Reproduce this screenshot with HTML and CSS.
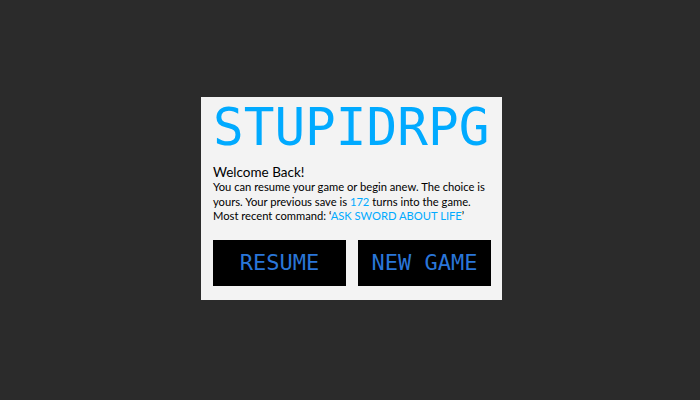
FILE: index.html
```html
<!DOCTYPE html>
<html>
<head>
<meta charset="utf-8">
<link rel="stylesheet" href="styles.css">
</head>
<body>
<div class="dialog">
  <h1 class="title">STUPIDRPG</h1>
  <div class="message">
    <p class="welcome">Welcome Back!</p>
    <p class="body">You can resume your game or begin anew. The choice is yours. Your previous save is <span class="hl">172</span> turns into the game.<br>Most recent command: ‘<span class="hl">ASK SWORD ABOUT LIFE</span>’</p>
  </div>
  <div class="actions">
    <button class="btn">RESUME</button>
    <button class="btn">NEW GAME</button>
  </div>
</div>
</body>
</html>
```

FILE: styles.css
```css
html, body {
  margin: 0;
  padding: 0;
}
body {
  background: #2b2b2b;
  min-height: 100vh;
  display: flex;
  align-items: center;
  justify-content: center;
}
.dialog {
  box-sizing: border-box;
  width: 301px;
  height: 203px;
  margin: -3px 0 0 3px;
  background: #f3f3f3;
  padding: 5px 11px 0 12px;
  display: flex;
  flex-direction: column;
}
.title {
  margin: 0;
  font-family: "DejaVu Sans Mono", monospace;
  font-weight: normal;
  font-size: 51px;
  line-height: 51px;
  color: #00aaff;
  white-space: nowrap;
}
.message {
  margin-top: 11px;
  font-family: Lato, "Open Sans", sans-serif;
  color: #000;
}
.message p {
  margin: 0;
}
.welcome {
  font-size: 13.5px;
  line-height: 16px;
}
.body {
  font-size: 11.2px;
  line-height: 14.5px;
}
.hl {
  color: #00aaff;
}
.actions {
  margin-top: 16px;
  display: flex;
  gap: 12px;
}
.btn {
  flex: 1;
  height: 46px;
  border: 0;
  padding: 0;
  background: #000;
  color: #2a76d8;
  font-family: "DejaVu Sans Mono", monospace;
  font-size: 22px;
}
```
